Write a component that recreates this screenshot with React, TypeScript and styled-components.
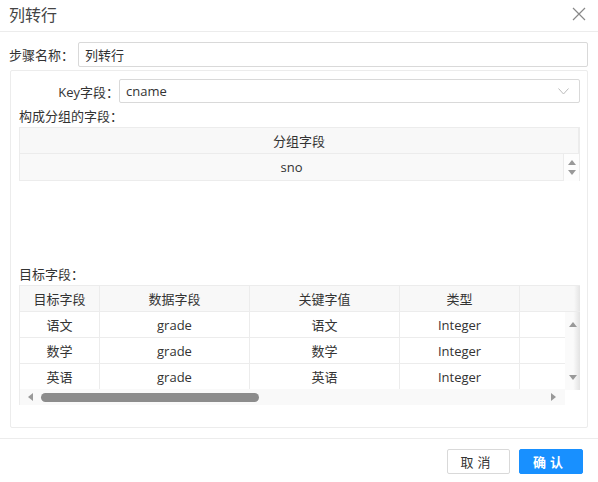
import React from 'react';
import styled, { createGlobalStyle } from 'styled-components';

const GlobalStyle = createGlobalStyle`
    html, body {
        margin: 0;
        padding: 0;
        background: #fff;
    }
    body {
        font-family: "Open Sans", "Noto Sans CJK SC", sans-serif;
        font-size: 13px;
        color: #333;
    }
    * {
        box-sizing: border-box;
    }
`;

const colunas = [
    { titulo: '目标字段', largura: 80 },
    { titulo: '数据字段', largura: 150 },
    { titulo: '关键字值', largura: 150 },
    { titulo: '类型', largura: 120 },
    { titulo: '', largura: 120 },
];

const linhas = [
    ['语文', 'grade', '语文', 'Integer', ''],
    ['数学', 'grade', '数学', 'Integer', ''],
    ['英语', 'grade', '英语', 'Integer', ''],
];

const Dialog = styled.div`
    width: 598px;
    height: 482px;
    background: #fff;
    display: flex;
    flex-direction: column;
`;

const Header = styled.div`
    height: 32px;
    padding: 0 12px 0 9px;
    display: flex;
    align-items: center;
    justify-content: space-between;
    border-bottom: 1px solid #ececec;
`;

const Title = styled.div`
    font-size: 16px;
    color: #444;
    padding-bottom: 3px;
`;

const CloseBtn = styled.div`
    width: 14px;
    height: 14px;
    display: flex;
    margin-bottom: 4px;
`;

const Body = styled.div`
    padding: 10px 10px 0 9px;
`;

const FieldRow = styled.div<{ labelWidth: number; justify?: string }>`
    display: flex;
    align-items: center;
    height: 25px;

    > label {
        width: ${({ labelWidth }) => labelWidth}px;
        flex-shrink: 0;
        text-align: ${({ justify }) => justify || 'left'};
        color: #333;
    }
`;

const Input = styled.div`
    flex: 1;
    height: 100%;
    border: 1px solid #d9d9d9;
    border-radius: 2px;
    padding: 0 6px;
    display: flex;
    align-items: center;
    color: #333;
`;

const Select = styled(Input)`
    justify-content: space-between;
    padding-right: 10px;
`;

const Panel = styled.div`
    margin-top: 3px;
    margin-left: 1px;
    height: 358px;
    border: 1px solid #ececec;
    border-radius: 2px;
    padding: 8px 7px 0 8px;
    display: flex;
    flex-direction: column;
`;

const SectionLabel = styled.div<{ top: number }>`
    height: 23px;
    margin-top: ${({ top }) => top}px;
    display: flex;
    align-items: center;
`;

const GroupTable = styled.div`
    border: 1px solid #ececec;
    border-bottom: none;
`;

const HeadRow = styled.div`
    display: flex;
    height: 26px;
    background: #f8f8f8;
    border-bottom: 1px solid #ececec;
    overflow: hidden;
`;

const HeadCell = styled.div<{ w?: number }>`
    ${({ w }) => (w ? `width: ${w}px; flex-shrink: 0;` : 'flex: 1;')}
    display: flex;
    align-items: center;
    justify-content: center;
    border-right: 1px solid #ececec;
    white-space: nowrap;
`;

const GroupBody = styled.div`
    display: flex;
    height: 27px;
`;

const GroupCell = styled.div`
    flex: 1;
    background: #f9f9f9;
    border-bottom: 1px solid #ececec;
    border-right: 1px solid #ececec;
    display: flex;
    align-items: center;
    justify-content: center;
`;

const Spinner = styled.div`
    width: 15px;
    display: flex;
    flex-direction: column;
    align-items: center;
    justify-content: center;
    gap: 5px;
    background: #fdfdfd;
`;

const Arrow = styled.div<{ dir: 'up' | 'down' | 'left' | 'right' }>`
    width: 0;
    height: 0;
    border-style: solid;
    ${({ dir }) =>
        dir === 'up'
            ? 'border-width: 0 4px 5px 4px; border-color: transparent transparent #999 transparent;'
            : dir === 'down'
            ? 'border-width: 5px 4px 0 4px; border-color: #999 transparent transparent transparent;'
            : dir === 'left'
            ? 'border-width: 4px 5px 4px 0; border-color: transparent #999 transparent transparent;'
            : 'border-width: 4px 0 4px 5px; border-color: transparent transparent transparent #999;'}
`;

const Spacer = styled.div`
    height: 81px;
`;

const TargetTable = styled.div`
    position: relative;
    border-top: 1px solid #ececec;
    border-left: 1px solid #ececec;
    overflow: hidden;
    height: 120px;
`;

const TargetHead = styled(HeadRow)`
    position: relative;

    &::after {
        content: '';
        position: absolute;
        right: 0;
        top: 0;
        bottom: 0;
        width: 6px;
        background: linear-gradient(to right, rgba(230, 230, 230, 0), #e4e4e4);
    }
`;

const TargetMain = styled.div`
    display: flex;
    height: 93px;
`;

const TargetRows = styled.div`
    flex: 1;
    overflow: hidden;
    display: flex;
    flex-direction: column;
`;

const DataRow = styled.div`
    display: flex;
    height: 26px;
    flex-shrink: 0;
    border-bottom: 1px solid #ececec;
`;

const DataCell = styled(HeadCell)`
    background: #fff;
`;

const VScroll = styled.div`
    width: 15px;
    height: 78px;
    display: flex;
    flex-direction: column;
    align-items: center;
    justify-content: space-between;
    padding: 10px 0 10px 0;
    background: linear-gradient(to right, #fafafa, #fafafa 55%, #e2e2e2);
`;

const HScroll = styled.div`
    position: absolute;
    left: 0;
    right: 15px;
    bottom: 0;
    height: 16px;
    background: #f9f9f9;
    display: flex;
    align-items: center;
    padding: 0 9px 0 8px;
`;

const HTrack = styled.div`
    flex: 1;
    height: 100%;
    display: flex;
    align-items: center;
    padding: 0 8px;
`;

const Thumb = styled.div<{ w: number }>`
    width: ${({ w }) => w}px;
    height: 9px;
    border-radius: 5px;
    background: #8c8c8c;
`;

const Footer = styled.div`
    margin-top: 10px;
    border-top: 1px solid #ececec;
    display: flex;
    justify-content: flex-end;
    gap: 9px;
    padding: 10px 15px 0 0;
`;

const Button = styled.button<{ primary?: boolean }>`
    height: 25px;
    width: ${({ primary }) => (primary ? 64 : 63)}px;
    border-radius: 2px;
    font-family: "Open Sans", "Noto Sans CJK SC", sans-serif;
    font-size: 13px;
    letter-spacing: 4px;
    padding-left: 4px;
    cursor: pointer;
    border: 1px solid ${({ primary }) => (primary ? '#1890ff' : '#d9d9d9')};
    background: ${({ primary }) => (primary ? '#1890ff' : '#fff')};
    color: ${({ primary }) => (primary ? '#fff' : '#333')};
    font-weight: ${({ primary }) => (primary ? 700 : 400)};
`;

const App: React.FC = () => {
    return (
        <Dialog>
            <GlobalStyle />
            <Header>
                <Title>列转行</Title>
                <CloseBtn>
                    <svg width="14" height="14" viewBox="0 0 14 14">
                        <path d="M1 1 L13 13 M13 1 L1 13" stroke="#888" strokeWidth="1.2" fill="none" />
                    </svg>
                </CloseBtn>
            </Header>

            <Body>
                <FieldRow labelWidth={69}>
                    <label>步骤名称：</label>
                    <Input>列转行</Input>
                </FieldRow>

                <Panel>
                    <FieldRow labelWidth={100} justify="right" style={{ height: 24 }}>
                        <label>Key字段：</label>
                        <Select>
                            cname
                            <svg width="11" height="7" viewBox="0 0 11 7">
                                <path d="M0.5 0.5 L5.5 6 L10.5 0.5" stroke="#bbb" strokeWidth="1" fill="none" />
                            </svg>
                        </Select>
                    </FieldRow>

                    <SectionLabel top={1}>构成分组的字段：</SectionLabel>
                    <GroupTable>
                        <HeadRow>
                            <HeadCell>分组字段</HeadCell>
                        </HeadRow>
                        <GroupBody>
                            <GroupCell>sno</GroupCell>
                            <Spinner>
                                <Arrow dir="up" />
                                <Arrow dir="down" />
                            </Spinner>
                        </GroupBody>
                    </GroupTable>

                    <Spacer />

                    <SectionLabel top={0}>目标字段：</SectionLabel>
                    <TargetTable>
                        <TargetHead>
                            {colunas.map((c, i) => (
                                <HeadCell key={i} w={c.largura}>
                                    {c.titulo}
                                </HeadCell>
                            ))}
                        </TargetHead>
                        <TargetMain>
                            <TargetRows>
                                {linhas.map((linha, i) => (
                                    <DataRow key={i}>
                                        {linha.map((valor, j) => (
                                            <DataCell key={j} w={colunas[j].largura}>
                                                {valor}
                                            </DataCell>
                                        ))}
                                    </DataRow>
                                ))}
                            </TargetRows>
                            <VScroll>
                                <Arrow dir="up" />
                                <Arrow dir="down" />
                            </VScroll>
                        </TargetMain>
                        <HScroll>
                            <Arrow dir="left" />
                            <HTrack>
                                <Thumb w={218} />
                            </HTrack>
                            <Arrow dir="right" />
                        </HScroll>
                    </TargetTable>
                </Panel>
            </Body>

            <Footer>
                <Button>取消</Button>
                <Button primary>确认</Button>
            </Footer>
        </Dialog>
    );
};

export default App;
